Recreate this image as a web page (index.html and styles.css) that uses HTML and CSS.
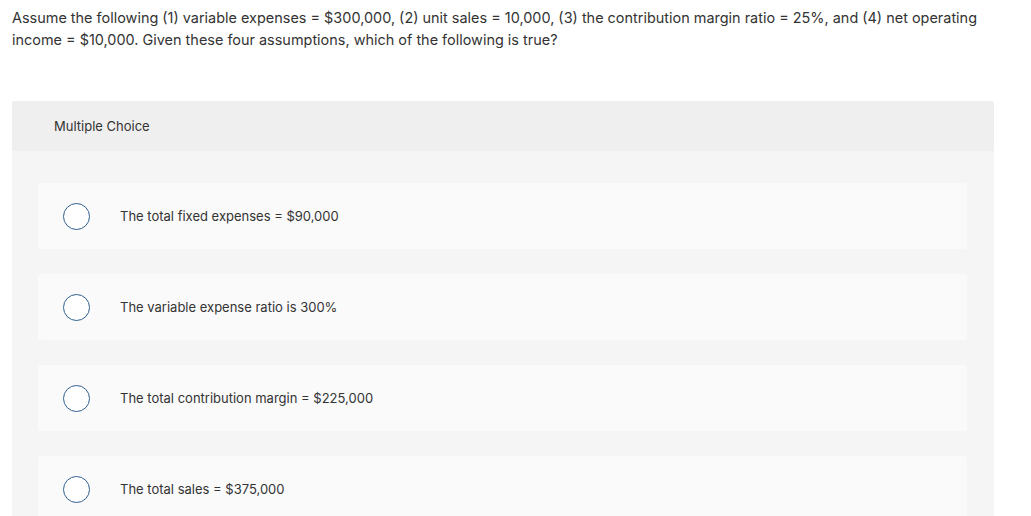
FILE: index.html
```html
<!DOCTYPE html>
<html>
<head>
<meta charset="utf-8">
<link rel="stylesheet" href="styles.css">
</head>
<body>
<div class="page">
  <p class="question">Assume the following (1) variable expenses = $300,000, (2) unit sales = 10,000, (3) the contribution margin ratio = 25%, and (4) net operating income = $10,000. Given these four assumptions, which of the following is true?</p>
  <section class="panel">
    <header class="panel-head">Multiple Choice</header>
    <div class="choices">
      <div class="choice"><span class="radio"></span><span class="label">The total fixed expenses = $90,000</span></div>
      <div class="choice"><span class="radio"></span><span class="label">The variable expense ratio is 300%</span></div>
      <div class="choice"><span class="radio"></span><span class="label">The total contribution margin = $225,000</span></div>
      <div class="choice"><span class="radio"></span><span class="label">The total sales = $375,000</span></div>
    </div>
  </section>
</div>
</body>
</html>
```
FILE: styles.css
```css
html, body {
  margin: 0;
  padding: 0;
  background: #ffffff;
}
body {
  font-family: "Inter", "Lato", sans-serif;
  color: #333333;
}
.page {
  padding: 7px 37px 0 12px;
}
.question {
  margin: 0;
  font-size: 14.45px;
  line-height: 22px;
  color: #333333;
}
.panel {
  margin-top: 50px;
  background: #f5f5f5;
  border-radius: 3px 3px 0 0;
}
.panel-head {
  height: 50px;
  display: flex;
  align-items: center;
  padding-left: 42px;
  background: #efefef;
  font-size: 13px;
  color: #333333;
  border-radius: 3px 3px 0 0;
}
.choices {
  display: flex;
  flex-direction: column;
  gap: 25px;
  padding: 32px 27px 0 26px;
}
.choice {
  height: 66px;
  display: flex;
  align-items: center;
  background: #fafafa;
  border-radius: 3px;
}
.radio {
  width: 25px;
  height: 25px;
  border: 1.5px solid #2f5f8f;
  border-radius: 50%;
  margin-left: 25px;
  margin-right: 30px;
  flex: none;
  background: #ffffff;
}
.label {
  font-size: 13px;
  color: #333333;
}
```
